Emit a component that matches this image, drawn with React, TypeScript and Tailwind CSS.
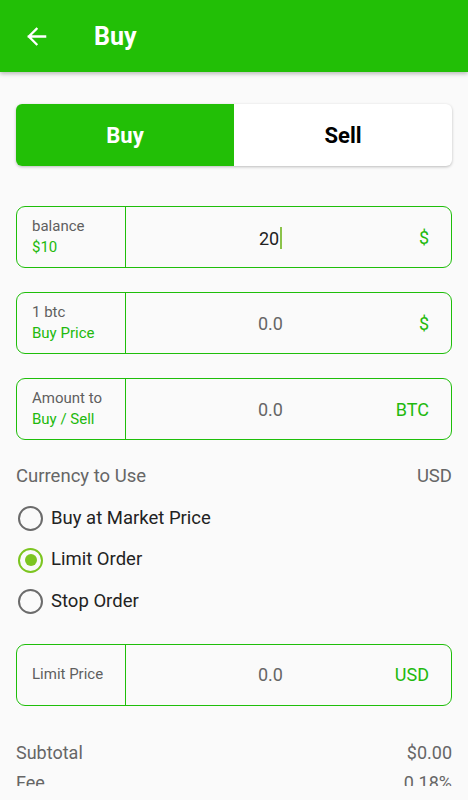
import React from "react";

function Field({ top, bottom, value, unit, dark }: { top: string; bottom?: string; value: string; unit: string; dark?: boolean }) {
  return (
    <div className="flex h-[62px] rounded-[9px] border-[1.5px] border-[#1fbe0a] bg-[#fafafa]">
      <div className="flex w-[109px] shrink-0 flex-col justify-center border-r-[1.5px] border-[#1fbe0a] pl-[15px] text-[15px] leading-[21px]">
        <span className="text-[#5f5f5f]">{top}</span>
        {bottom && <span className="text-[#22b90d]">{bottom}</span>}
      </div>
      <div className="relative flex flex-1 items-center">
        <div className="flex-1 pr-[36px] text-center text-[18px]">
          <span className={dark ? "text-[#222]" : "text-[#666]"}>{value}</span>
          {dark && <span className="ml-[1px] inline-block h-[22px] w-[2px] translate-y-[4px] bg-[#8bc34a]" />}
        </div>
        <span className="absolute right-[22px] text-[18px] text-[#22b90d]">{unit}</span>
      </div>
    </div>
  );
}

function Radio({ label, checked }: { label: string; checked?: boolean }) {
  return (
    <div className="flex h-[41.5px] items-center">
      <div className={`ml-[18px] flex h-[25px] w-[25px] items-center justify-center rounded-full border-[2.5px] ${checked ? "border-[#7cc520]" : "border-[#6b6b6b]"}`}>
        {checked && <div className="h-[12px] w-[12px] rounded-full bg-[#7cc520]" />}
      </div>
      <span className="ml-[8px] text-[18.5px] text-[#222]">{label}</span>
    </div>
  );
}

export default function App() {
  return (
    <div className="h-[800px] w-[468px] overflow-hidden bg-[#fafafa]" style={{ fontFamily: "Roboto, 'Noto Sans', sans-serif" }}>
      <div className="relative z-10 flex h-[72px] items-center bg-[#22bf06] shadow-[0_2px_4px_rgba(0,0,0,0.25)]">
        <svg className="ml-[25px]" width="23" height="23" viewBox="0 0 24 24" fill="none" stroke="white" strokeWidth="2.4" strokeLinecap="square">
          <path d="M21 12H4M12 4l-8 8 8 8" />
        </svg>
        <span className="ml-[46px] mt-[2px] text-[25px] font-bold text-white">Buy</span>
      </div>
      <div className="h-[714px] overflow-hidden px-[16px]">
        <div className="mt-[32px] flex h-[62px] overflow-hidden rounded-[6px] bg-white shadow-[0_1px_3px_rgba(0,0,0,0.25)]">
          <div className="flex w-[218px] items-center justify-center bg-[#22bf06] text-[22px] font-bold text-white">Buy</div>
          <div className="flex flex-1 items-center justify-center text-[22px] font-bold text-black">Sell</div>
        </div>
        <div className="mt-[40px] flex flex-col gap-[24px]">
          <Field top="balance" bottom="$10" value="20" unit="$" dark />
          <Field top="1 btc" bottom="Buy Price" value="0.0" unit="$" />
          <Field top="Amount to" bottom="Buy / Sell" value="0.0" unit="BTC" />
        </div>
        <div className="mt-[22px] flex justify-between text-[18.5px] leading-[28px] text-[#666]">
          <span>Currency to Use</span>
          <span>USD</span>
        </div>
        <div className="-ml-[16px] mt-[8px] flex flex-col">
          <Radio label="Buy at Market Price" />
          <Radio label="Limit Order" checked />
          <Radio label="Stop Order" />
        </div>
        <div className="mt-[21px]">
          <Field top="Limit Price" value="0.0" unit="USD" />
        </div>
        <div className="mt-[32px] flex justify-between text-[18px] leading-[30px] text-[#666]">
          <span>Subtotal</span>
          <span>$0.00</span>
        </div>
        <div className="flex justify-between text-[18px] leading-[30px] text-[#666]">
          <span>Fee</span>
          <span>0.18%</span>
        </div>
      </div>
    </div>
  );
}
